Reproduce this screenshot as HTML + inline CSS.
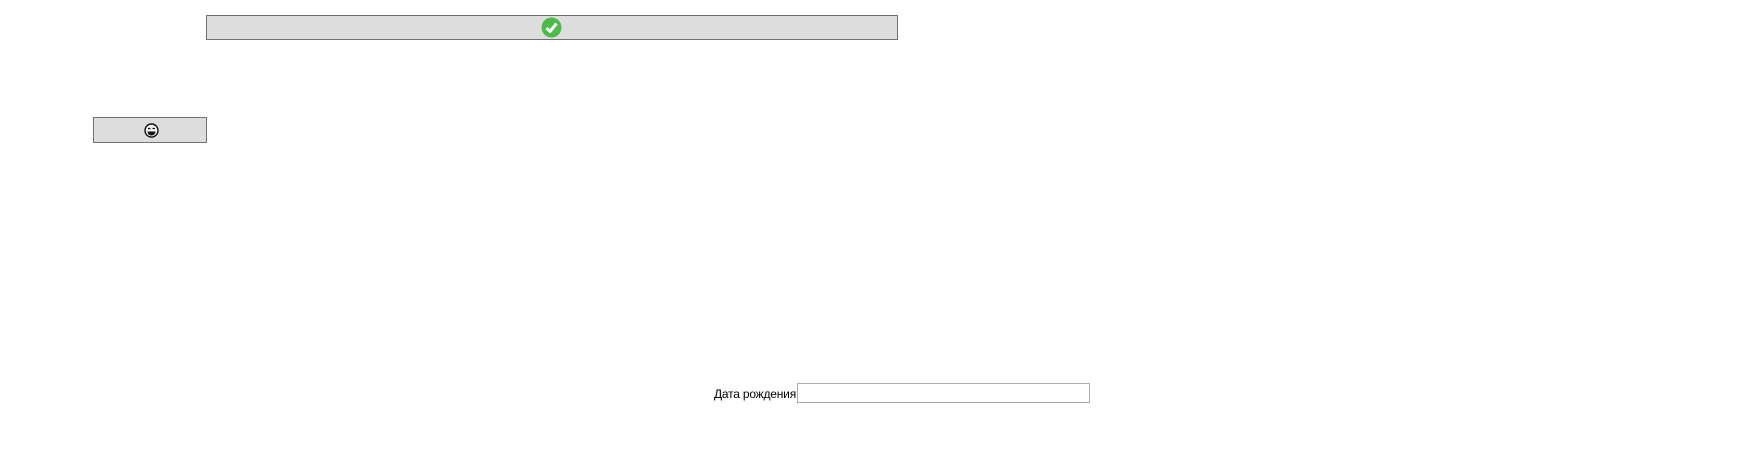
<!DOCTYPE html>
<html><head><meta charset="utf-8"><style>
html,body{margin:0;padding:0;background:#fff;width:1745px;height:457px;overflow:hidden;font-family:"Segoe UI","Liberation Sans","DejaVu Sans",sans-serif;}
.b{position:absolute;background:#dddddd;border:1px solid #707070;box-sizing:border-box;}
</style></head><body>
<div class="b" style="left:206px;top:15px;width:692px;height:25px;"></div>
<svg style="position:absolute;left:541px;top:17px" width="21" height="21" viewBox="0 0 21 21"><circle cx="10.5" cy="10.5" r="10" fill="#4cbb4c"/><path d="M5.5 11 L9 14.5 L15.5 6.5" stroke="#fff" stroke-width="3" fill="none" stroke-linejoin="round"/></svg>
<div class="b" style="left:93px;top:117px;width:114px;height:26px;"></div>
<svg style="position:absolute;left:144px;top:123px" width="15" height="15" viewBox="0 0 15 15"><circle cx="7.5" cy="7.5" r="6.5" fill="#f4f4f4" stroke="#111" stroke-width="1.4"/><path d="M4 5.5h2.5M8.5 5.5H11" stroke="#111" stroke-width="1.3"/><path d="M3.5 8.5h8c0 2.5-2 4-4 4s-4-1.5-4-4z" fill="#111"/></svg>
<div style="position:absolute;left:600px;width:196px;text-align:right;top:385px;font-size:12px;line-height:18px;color:#000;white-space:nowrap;letter-spacing:-0.2px;">Дата рождения</div>
<div style="position:absolute;left:797px;top:383px;width:293px;height:20px;border:1px solid #acacac;box-sizing:border-box;background:#fff;"></div>
</body></html>
